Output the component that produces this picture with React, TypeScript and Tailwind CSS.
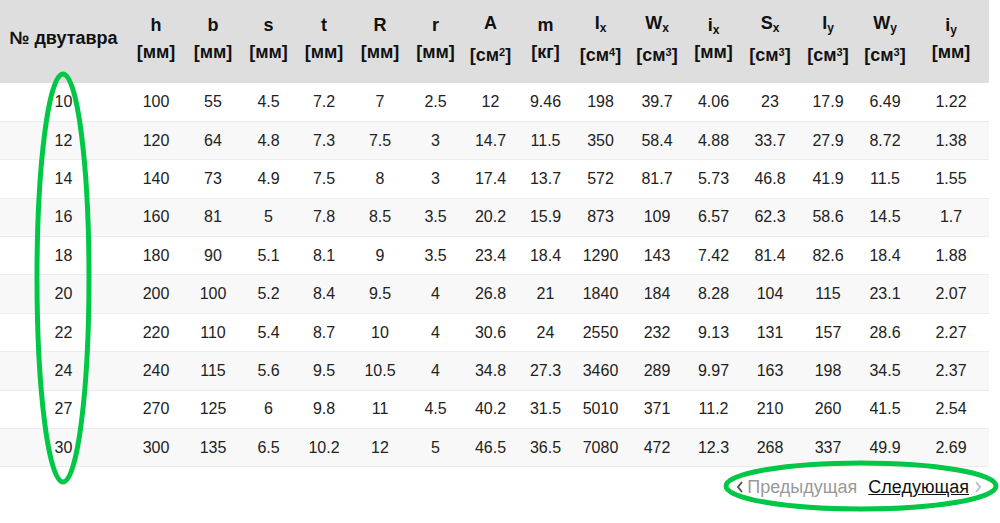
import React from 'react';

type Col = { sym: React.ReactNode; unit: React.ReactNode; w: string };

const cols: Col[] = [
  { sym: 'h', unit: '[мм]', w: 'w-[58px]' },
  { sym: 'b', unit: '[мм]', w: 'w-[56px]' },
  { sym: 's', unit: '[мм]', w: 'w-[55px]' },
  { sym: 't', unit: '[мм]', w: 'w-[56px]' },
  { sym: 'R', unit: '[мм]', w: 'w-[56px]' },
  { sym: 'r', unit: '[мм]', w: 'w-[55px]' },
  { sym: 'A', unit: <>[см<sup>2</sup>]</>, w: 'w-[55px]' },
  { sym: 'm', unit: '[кг]', w: 'w-[55px]' },
  { sym: <>I<sub>x</sub></>, unit: <>[см<sup>4</sup>]</>, w: 'w-[55px]' },
  { sym: <>W<sub>x</sub></>, unit: <>[см<sup>3</sup>]</>, w: 'w-[58px]' },
  { sym: <>i<sub>x</sub></>, unit: '[мм]', w: 'w-[55px]' },
  { sym: <>S<sub>x</sub></>, unit: <>[см<sup>3</sup>]</>, w: 'w-[58px]' },
  { sym: <>I<sub>y</sub></>, unit: <>[см<sup>3</sup>]</>, w: 'w-[58px]' },
  { sym: <>W<sub>y</sub></>, unit: <>[см<sup>3</sup>]</>, w: 'w-[56px]' },
  { sym: <>i<sub>y</sub></>, unit: '[мм]', w: 'w-[76px]' },
];

const rows: string[][] = [
  ['10', '100', '55', '4.5', '7.2', '7', '2.5', '12', '9.46', '198', '39.7', '4.06', '23', '17.9', '6.49', '1.22'],
  ['12', '120', '64', '4.8', '7.3', '7.5', '3', '14.7', '11.5', '350', '58.4', '4.88', '33.7', '27.9', '8.72', '1.38'],
  ['14', '140', '73', '4.9', '7.5', '8', '3', '17.4', '13.7', '572', '81.7', '5.73', '46.8', '41.9', '11.5', '1.55'],
  ['16', '160', '81', '5', '7.8', '8.5', '3.5', '20.2', '15.9', '873', '109', '6.57', '62.3', '58.6', '14.5', '1.7'],
  ['18', '180', '90', '5.1', '8.1', '9', '3.5', '23.4', '18.4', '1290', '143', '7.42', '81.4', '82.6', '18.4', '1.88'],
  ['20', '200', '100', '5.2', '8.4', '9.5', '4', '26.8', '21', '1840', '184', '8.28', '104', '115', '23.1', '2.07'],
  ['22', '220', '110', '5.4', '8.7', '10', '4', '30.6', '24', '2550', '232', '9.13', '131', '157', '28.6', '2.27'],
  ['24', '240', '115', '5.6', '9.5', '10.5', '4', '34.8', '27.3', '3460', '289', '9.97', '163', '198', '34.5', '2.37'],
  ['27', '270', '125', '6', '9.8', '11', '4.5', '40.2', '31.5', '5010', '371', '11.2', '210', '260', '41.5', '2.54'],
  ['30', '300', '135', '6.5', '10.2', '12', '5', '46.5', '36.5', '7080', '472', '12.3', '268', '337', '49.9', '2.69'],
];

export default function App() {
  return (
    <div className="relative w-[1000px] h-[523px] bg-white overflow-hidden font-['Liberation_Sans',Arial,sans-serif] text-[16px]">
      <table className="w-[989px] border-collapse table-fixed">
        <thead>
          <tr className="bg-[#dedede] h-[83px] text-[#111] font-bold text-[18px]">
            <th className="w-[127px] text-center align-middle pb-[7px]">№ двутавра</th>
            {cols.map((c, i) => (
              <th key={i} className={`${c.w} text-center align-middle px-0 pb-[7px]`}>
                <div className="leading-[28px] [&_sub]:text-[12px]">{c.sym}</div>
                <div className="leading-[26px] [&_sup]:text-[11px] [&_sup]:top-[-0.4em] has-[sup]:pt-[5px]">{c.unit}</div>
              </th>
            ))}
          </tr>
        </thead>
        <tbody>
          {rows.map((r, i) => (
            <tr key={i} className={`h-[38.4px] border-b border-[#ececec] ${i % 2 === 1 ? 'bg-[#f8f8f8]' : 'bg-white'}`}>
              {r.map((v, j) => (
                <td key={j} className="text-center align-middle text-[#222] p-0">{v}</td>
              ))}
            </tr>
          ))}
        </tbody>
      </table>

      <div className="flex justify-end items-center pr-[18px] mt-[9px] h-[22px] text-[18px]">
        <span className="flex items-center text-[#999]">
          <svg width="8" height="12" viewBox="0 0 8 12" className="mr-[3px]">
            <path d="M6 1 L2 6 L6 11" fill="none" stroke="#555" strokeWidth="2" />
          </svg>
          Предыдущая
        </span>
        <a className="ml-[11px] text-[#111] underline">Следующая</a>
        <svg width="8" height="12" viewBox="0 0 8 12" className="ml-[5px]">
          <path d="M2 1 L6 6 L2 11" fill="none" stroke="#b5c3d0" strokeWidth="2" />
        </svg>
      </div>

      <svg className="absolute left-0 top-0 pointer-events-none" width="1000" height="523">
        <ellipse cx="63" cy="278" rx="26" ry="204" fill="none" stroke="#00c846" strokeWidth="5" />
        <ellipse cx="861" cy="486" rx="135" ry="23" fill="none" stroke="#00c846" strokeWidth="5" />
      </svg>
    </div>
  );
}
